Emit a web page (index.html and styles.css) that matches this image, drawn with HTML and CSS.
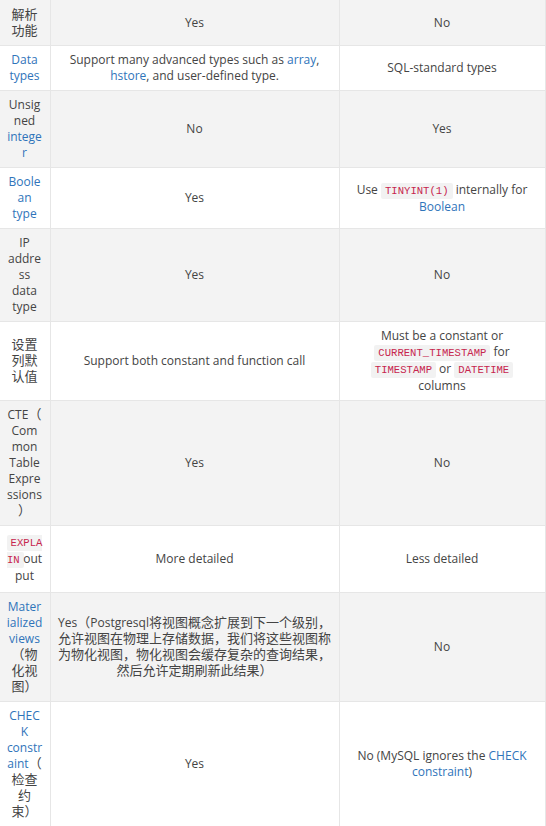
FILE: index.html
```html
<!DOCTYPE html>
<html>
<head>
<meta charset="utf-8">
<link rel="stylesheet" href="styles.css">
</head>
<body>
<table class="cmp">
<colgroup><col class="c1"><col class="c2"><col class="c3"></colgroup>
<tbody>
<tr><td><span class="zh">解析功能</span></td><td>Yes</td><td>No</td></tr>
<tr><td><a>Data types</a></td><td>Support many advanced types such as <a>array</a>, <a>hstore</a>, and user-defined type.</td><td>SQL-standard types</td></tr>
<tr><td>Unsigned <a>integer</a></td><td>No</td><td>Yes</td></tr>
<tr><td><a>Boolean type</a></td><td>Yes</td><td>Use <code>TINYINT(1)</code> internally for <a>Boolean</a></td></tr>
<tr><td>IP address data type</td><td>Yes</td><td>No</td></tr>
<tr><td><span class="zh">设置列默认值</span></td><td>Support both constant and function call</td><td>Must be a constant or <code>CURRENT_TIMESTAMP</code> for <code>TIMESTAMP</code> or <code>DATETIME</code> columns</td></tr>
<tr><td>CTE<span class="zh">（</span><wbr>Common Table Expressions<span class="zh">）</span></td><td>Yes</td><td>No</td></tr>
<tr class="tall"><td class="tight"><code>EXPLAIN</code> output</td><td>More detailed</td><td>Less detailed</td></tr>
<tr><td><a>Materialized views</a><span class="zh">（物化视图）</span></td><td>Yes<span class="zh">（</span>Postgresql<span class="zh">将视图概念扩展到下一个级别，允许视图在物理上存储数据，我们将这些视图称为物化视图，物化视图会缓存复杂的查询结果，然后允许定期刷新此结果）</span></td><td>No</td></tr>
<tr><td><a>CHECK constraint</a><span class="zh">（<wbr>检查约束）</span></td><td>Yes</td><td>No (MySQL ignores the <a>CHECK constraint</a>)</td></tr>
</tbody>
</table>
</body>
</html>
```
FILE: styles.css
```css
html, body {
  margin: 0;
  padding: 0;
  background: #fff;
}
.cmp {
  border-collapse: collapse;
  table-layout: fixed;
  width: 545px;
  font-family: "Open Sans", "Noto Sans CJK SC", sans-serif;
  font-size: 12px;
  line-height: 16px;
  color: #444;
  text-spacing-trim: space-all;
}
.c1 { width: 50px; }
.c2 { width: 289px; }
.c3 { width: 206px; }
.cmp td {
  border: 1px solid #e6e6e6;
  padding: 6px 6.5px;
  text-align: center;
  vertical-align: middle;
  overflow-wrap: break-word;
  word-wrap: break-word;
}
.cmp td:first-child { padding-right: 7px; }
.cmp tr:first-child td { border-top: none; padding-top: 7px; }
.cmp td:first-child { border-left: none; }
.cmp tr:nth-child(odd) td { background: #f3f3f3; }
.cmp tr.tall td { padding-top: 8px; padding-bottom: 8px; }
.cmp a { color: #2f74ba; text-decoration: none; }
.cmp td.tight { word-spacing: -3.5px; word-break: break-all; }
.zh {
  font-size: 13px;
  line-height: 14px;
}
.cmp code {
  font-family: "Liberation Mono", "DejaVu Sans Mono", monospace;
  font-size: 10.6px;
  color: #c7254e;
  background: #f2f2f2;
  padding: 2px 4px;
  border-radius: 2px;
  word-spacing: normal;
}
```
